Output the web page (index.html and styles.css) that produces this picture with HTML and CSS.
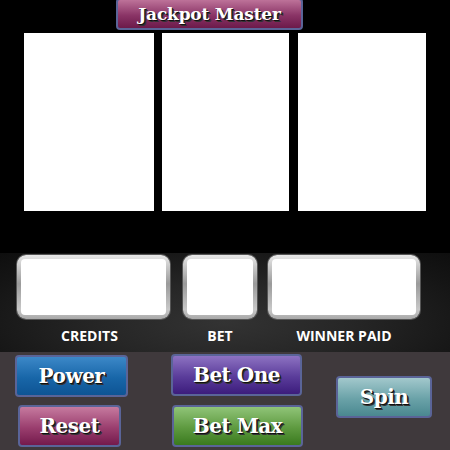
FILE: index.html
```html
<!DOCTYPE html>
<html>
<head>
<meta charset="utf-8">
<link rel="stylesheet" href="styles.css">
</head>
<body>
<div class="machine">
  <div class="header">
    <div class="btn title">Jackpot Master</div>
  </div>
  <div class="reels">
    <div class="reel r1"></div>
    <div class="reel r2"></div>
    <div class="reel r3"></div>
  </div>
  <div class="displays">
    <div class="disp d-credits">
      <div class="frame"><div class="screen"></div></div>
      <div class="label">CREDITS</div>
    </div>
    <div class="disp d-bet">
      <div class="frame"><div class="screen"></div></div>
      <div class="label">BET</div>
    </div>
    <div class="disp d-paid">
      <div class="frame"><div class="screen"></div></div>
      <div class="label">WINNER PAID</div>
    </div>
  </div>
  <div class="controls">
    <div class="col c1">
      <div class="btn power">Power</div>
      <div class="btn reset">Reset</div>
    </div>
    <div class="col c2">
      <div class="btn betone">Bet One</div>
      <div class="btn betmax">Bet Max</div>
    </div>
    <div class="col c3">
      <div class="btn spin">Spin</div>
    </div>
  </div>
</div>
</body>
</html>
```

FILE: styles.css
```css
html, body {
  margin: 0;
  padding: 0;
  background: #000;
}
.machine {
  width: 450px;
  height: 450px;
  overflow: hidden;
  background: #000;
}
.btn {
  box-sizing: border-box;
  display: flex;
  align-items: center;
  justify-content: center;
  border: 2px solid #5a6498;
  border-radius: 4px;
  color: #fff;
  font-family: "DejaVu Serif", "Liberation Serif", serif;
  font-weight: bold;
  font-size: 20px;
  letter-spacing: -0.5px;
  text-shadow: 1px 1px 0 #111, 2px 2px 0 #333;
}
.header {
  height: 33px;
  display: flex;
  padding-left: 116px;
  align-items: flex-end;
  padding-bottom: 3px;
  box-sizing: border-box;
}
.title {
  width: 187px;
  height: 32px;
  margin-top: -2px;
  font-size: 17px;
  letter-spacing: -0.2px;
  background: linear-gradient(#bd7299, #8a3466 55%, #6c1a4a);
}
.reels {
  display: flex;
  padding-left: 24px;
  height: 178px;
}
.reel {
  background: #fff;
  height: 178px;
}
.r1 { width: 130px; }
.r2 { width: 127px; margin-left: 8px; }
.r3 { width: 128px; margin-left: 9px; }
.displays {
  margin-top: 42px;
  height: 99px;
  box-sizing: border-box;
  padding-top: 2px;
  display: flex;
  background: radial-gradient(ellipse at 50% 70%, #333 0%, #262626 40%, #151515 80%, #0e0e0e 100%);
}
.disp {
  display: flex;
  flex-direction: column;
  align-items: center;
}
.d-credits { width: 153px; margin-left: 17px; }
.d-bet { width: 74px; margin-left: 13px; }
.d-paid { width: 152px; margin-left: 11px; }
.frame {
  box-sizing: border-box;
  width: 100%;
  height: 64px;
  padding: 4px;
  border-radius: 9px;
  background: linear-gradient(#e8e8e8, #9a9a9a 45%, #c8c8c8 85%, #a8a8a8);
  box-shadow: 0 0 0 1px #555;
}
.screen {
  height: 100%;
  background: #fff;
  border-radius: 4px;
}
.label {
  margin-top: 9px;
  color: #fff;
  font-family: "Open Sans", "Liberation Sans", sans-serif;
  font-weight: bold;
  font-size: 14px;
  line-height: 16px;
}
.d-credits .label { margin-right: 8px; }
.controls {
  height: 98px;
  background: #3f393c;
  display: flex;
  padding-top: 2px;
  box-sizing: border-box;
}
.col {
  display: flex;
  flex-direction: column;
}
.c1 { width: 130px; }
.c2 { width: 160px; }
.power {
  width: 113px;
  height: 42px;
  margin-left: 15px;
  margin-top: 1px;
  background: linear-gradient(#3c88c8, #1866a8 55%, #0e5494);
}
.reset {
  width: 103px;
  height: 42px;
  margin-left: 18px;
  margin-top: 8px;
  background: linear-gradient(#c67a9f, #9a3e6e 55%, #741a4c);
}
.betone {
  width: 131px;
  height: 42px;
  margin-left: 41px;
  background: linear-gradient(#8d72c2, #5a3c9a 55%, #3c1c7c);
}
.betmax {
  width: 131px;
  height: 42px;
  margin-left: 42px;
  margin-top: 9px;
  background: linear-gradient(#90c478, #5e9a40 55%, #3a7a1e);
}
.spin {
  width: 96px;
  height: 42px;
  margin-left: 46px;
  margin-top: 22px;
  background: linear-gradient(#a2c8cc, #6aa2a8 55%, #4a8890);
}
```
